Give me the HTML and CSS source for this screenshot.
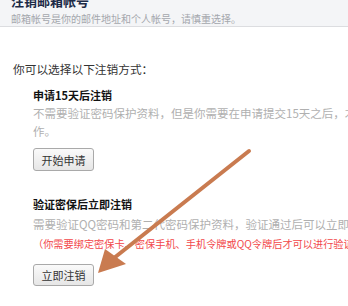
FILE: index.html
```html
<!DOCTYPE html>
<html lang="zh-CN">
<head>
    <meta charset="UTF-8">
    <meta name="viewport" content="width=device-width, initial-scale=1.0">
    <title>注销邮箱帐号</title>
    <link rel="stylesheet" href="styles.css">
</head>
<body>
    <div class="header">
        <h2 class="title">注销邮箱帐号</h2>
        <p class="subtitle">邮箱帐号是你的邮件地址和个人帐号，请慎重选择。</p>
    </div>

    <div class="content">
        <p class="intro">你可以选择以下注销方式：</p>

        <div class="way">
            <h3 class="way-title">申请15天后注销</h3>
            <p class="desc">不需要验证密码保护资料，但是你需要在申请提交15天之后，才能完成注销操<br>作。</p>
            <button class="btn">开始申请</button>
        </div>

        <div class="way way-now">
            <h3 class="way-title">验证密保后立即注销</h3>
            <p class="desc">需要验证QQ密码和第二代密码保护资料，验证通过后可以立即注销。</p>
            <p class="warn">（你需要绑定密保卡、密保手机、手机令牌或QQ令牌后才可以进行验证注销）</p>
            <button class="btn btn-now">立即注销</button>
        </div>
    </div>

    <!-- arrow pointing at the second button -->
    <svg class="arrow" width="348" height="306" viewBox="0 0 348 306">
        <line x1="249" y1="151" x2="114" y2="258" stroke="#c97b50" stroke-width="4" stroke-linecap="round"/>
        <polygon points="98,273 105,249 126,264" fill="#c97b50"/>
    </svg>
</body>
</html>
```

FILE: styles.css
```css
html, body {
    margin: 0;
    padding: 0;
    overflow: hidden;
}
body {
    font-family: "Noto Sans CJK SC", "Liberation Sans", sans-serif;
    background-color: #fff;
    color: #333;
    width: 348px;
    height: 306px;
    position: relative;
}
.header {
    background-color: #f4f5f7;
    border-bottom: 1px solid #dcdde0;
    height: 34px;
    padding: 0 11px;
}
.title {
    margin: -8px 0 0;
    font-size: 13px;
    line-height: 18px;
    font-weight: bold;
    color: #1d2b47;
}
.subtitle {
    margin: 1px 0 0;
    font-size: 10px;
    line-height: 16px;
    color: #a4a7ad;
}
.content {
    padding: 33px 0 0 13px;
    width: 420px;
}
.intro {
    margin: 0;
    font-size: 11.7px;
    line-height: 18px;
    color: #333;
}
.way {
    padding-left: 20px;
    margin-top: 8px;
}
.way-now {
    margin-top: 24px;
}
.way-title {
    margin: 0;
    font-size: 11px;
    line-height: 18px;
    font-weight: bold;
    color: #111;
}
.desc {
    margin: 0;
    font-size: 11.5px;
    line-height: 18px;
    color: #b0b0b0;
    white-space: nowrap;
}
.way-now .desc {
    margin-top: 2px;
}
.warn {
    margin: 2px 0 0;
    font-size: 10.2px;
    line-height: 18px;
    color: #f2474a;
    white-space: nowrap;
}
.btn {
    display: block;
    margin-top: 8px;
    width: 61px;
    height: 23px;
    padding: 0;
    font-family: inherit;
    font-size: 11px;
    color: #333;
    background: linear-gradient(#fafafa, #e6e6e6);
    border: 1px solid #a9a9a9;
    border-radius: 3px;
}
.btn-now {
    margin-top: 11px;
    height: 22px;
}
.arrow {
    position: absolute;
    left: 0;
    top: 0;
}
```
